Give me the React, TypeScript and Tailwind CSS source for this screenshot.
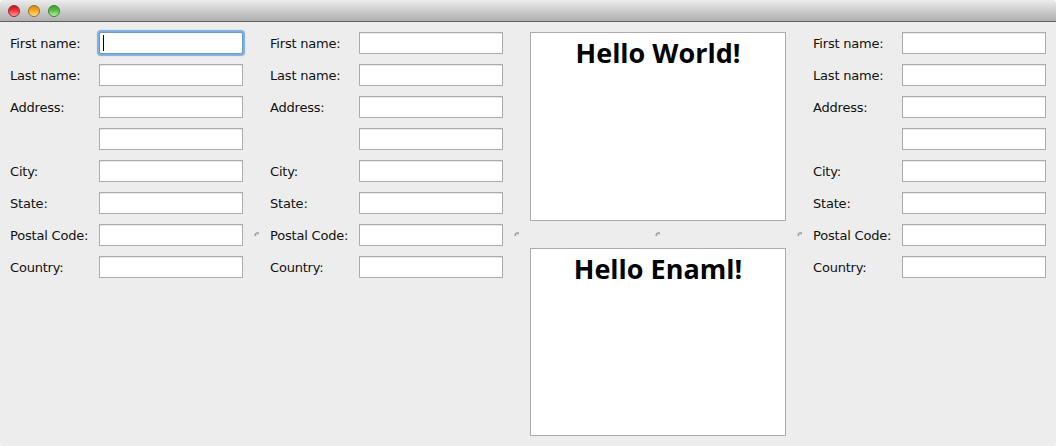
const labels = ["First name:", "Last name:", "Address:", "", "City:", "State:", "Postal Code:", "Country:"];

function Form({ focus = false }: { focus?: boolean }) {
  return (
    <div className="w-[233px] shrink-0 flex flex-col gap-2.5">
      {labels.map((l, i) => (
        <div key={i} className="flex items-center h-[22px]">
          <span className="w-[89px] shrink-0 text-[13px] tracking-[-0.2px] text-[#111] leading-none whitespace-pre">{l}</span>
          {focus && i === 0 ? (
            <div className="w-[144px] h-[22px] bg-white border border-[#6a9bd0] rounded-[2px] shadow-[0_0_1px_2px_#7fadde] flex items-center pl-[3px]">
              <div className="w-px h-4 bg-black" />
            </div>
          ) : (
            <div className="w-[144px] h-[22px] bg-white border border-[#ababab] shadow-[inset_0_1px_0_#e8e8e8]" />
          )}
        </div>
      ))}
    </div>
  );
}

function Handle() {
  return (
    <svg width="6" height="6" viewBox="0 0 6 6">
      <path d="M1 5 L1.5 3 L3 2 L5 2" fill="none" stroke="#9a9a9a" strokeWidth="1.4" />
      <path d="M2 5 L3 3.6 L5 3.4" fill="none" stroke="#d2d2d2" strokeWidth="1" />
    </svg>
  );
}

function Splitter() {
  return (
    <div className="w-[27px] shrink-0 flex justify-center pt-[199px]">
      <Handle />
    </div>
  );
}

export default function App() {
  return (
    <div className="w-[1056px] h-[446px] overflow-hidden bg-[#ededed] rounded-t-[4px] rounded-b-[3px] flex flex-col font-['DejaVu_Sans',sans-serif]">
      <div className="h-[22px] shrink-0 bg-gradient-to-b from-[#ececec] to-[#b0b0b0] border-b border-[#5f5f5f] flex items-center gap-[8px] pl-[8px]">
        <div className="w-3 h-3 rounded-full border border-[#8e2a2e] bg-[linear-gradient(to_bottom,#c8141e,#f0353d_45%,#ff9a9a)]" />
        <div className="w-3 h-3 rounded-full border border-[#9a6c1c] bg-[linear-gradient(to_bottom,#d98a12,#f4a926_45%,#ffe08a)]" />
        <div className="w-3 h-3 rounded-full border border-[#3f7f36] bg-[linear-gradient(to_bottom,#3f9f33,#58bf48_45%,#bdf0a4)]" />
      </div>
      <div className="flex-1 flex items-start pt-[10px] pl-[10px]">
        <Form focus />
        <Splitter />
        <Form />
        <Splitter />
        <div className="w-[256px] shrink-0 flex flex-col">
          <div className="h-[189px] bg-white border border-[#ababab] flex justify-center">
            <span className="font-['Open_Sans',sans-serif] text-[27px] font-bold leading-none text-black mt-[6px]">Hello World!</span>
          </div>
          <div className="h-[27px] flex justify-center pt-[10px]">
            <Handle />
          </div>
          <div className="h-[188px] bg-white border border-[#ababab] flex justify-center">
            <span className="font-['Open_Sans',sans-serif] text-[27px] font-bold leading-none text-black mt-[6px]">Hello Enaml!</span>
          </div>
        </div>
        <Splitter />
        <Form />
      </div>
    </div>
  );
}
